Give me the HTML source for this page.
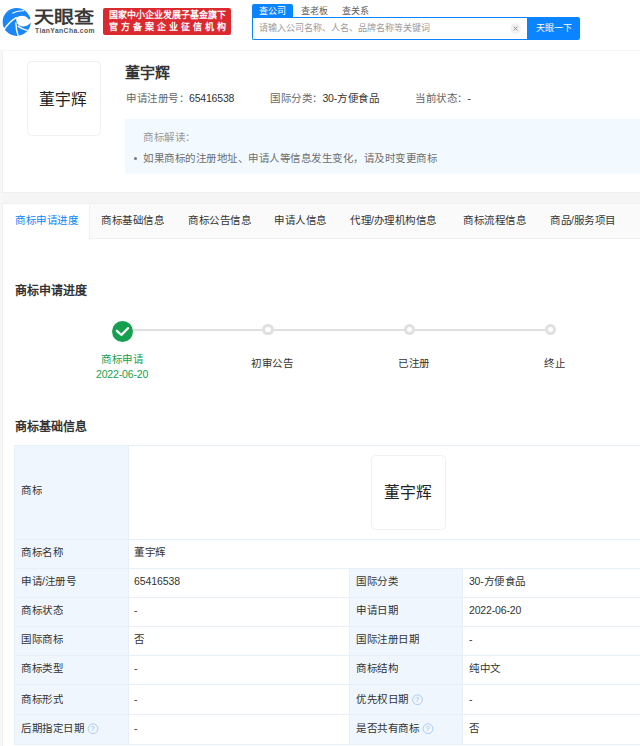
<!DOCTYPE html>
<html lang="zh-CN"><head><meta charset="utf-8">
<style>
*{margin:0;padding:0;box-sizing:border-box}
html,body{width:640px;height:746px;overflow:hidden;background:#f5f5f5;font-family:"Liberation Sans",sans-serif;color:#333}
.a{position:absolute;white-space:nowrap}
.s{position:absolute;white-space:nowrap;transform:scale(.75);transform-origin:0 0;font-size:14px;line-height:16px}
.box{position:absolute}
.logo-box{position:absolute;width:74.5px;height:74.5px;border:1px solid #f0f0f0;border-radius:4.5px;background:#fff}
.serif{font-family:"Liberation Serif",serif;font-size:21px;color:#222;letter-spacing:0.4px;line-height:22px}
.g{color:#666}
.bl{background:#eff6fd}
.q{display:inline-block;width:14px;height:14px;border:1.2px solid #98bfe7;border-radius:50%;color:#98bfe7;font-size:10px;line-height:12px;text-align:center;vertical-align:1.3px;margin-left:4.5px}
</style></head><body>
<!-- header -->
<div class="box" style="left:0;top:0;width:640px;height:50px;background:#fff"></div>
<svg class="a" style="left:0;top:0" width="40" height="40" viewBox="0 0 40 40">
<circle cx="16.65" cy="21.95" r="14" fill="#1a86f8"/>
<path d="M16.2 17.6 Q21 14.6 25.6 16.5 Q27.7 17.5 28.4 19.2 L31.5 19.2 L31.5 21 Q29.5 25.6 24.6 26.3 Q21 26.7 19 25.2 Q16.3 23.5 16.2 20 Z" fill="#fff"/>
<path d="M4 29.9 Q9 21.6 16.6 17.3" stroke="#fff" stroke-width="1.5" fill="none"/>
<path d="M15.8 22.6 Q16 30 18.4 36.5" stroke="#fff" stroke-width="1.4" fill="none"/>
<path d="M17.8 25.8 Q21.5 29.4 27.8 30.4" stroke="#fff" stroke-width="1.3" fill="none"/>
<path d="M12.3 13.2 Q18 10.6 24.3 10.8" stroke="#fff" stroke-width="1.1" fill="none"/>
</svg>
<div class="s" style="left:34px;top:8px;font-size:26px;line-height:28px;color:#383838;font-weight:bold;transform:scale(.771,.667)">天眼查</div>
<div class="s" style="left:35px;top:27px;font-size:9px;line-height:10px;color:#555;letter-spacing:0.54px;font-weight:bold">TianYanCha.com</div>
<div class="box" style="left:103px;top:7.5px;width:128px;height:27.75px;background:#da2a30;border-radius:2px"></div>
<div class="s" style="left:109px;top:10px;font-size:12px;line-height:14px;color:#fff;font-weight:bold">国家中小企业发展子基金旗下</div>
<div class="s" style="left:109px;top:22px;font-size:12px;line-height:14px;color:#fff;letter-spacing:3.94px;font-weight:bold">官方备案企业征信机构</div>
<!-- search -->
<div class="box" style="left:252px;top:3.9px;width:41.2px;height:13.8px;background:#0a84ff;border-radius:2px 2px 0 0"></div>
<div class="s" style="left:259px;top:6px;font-size:12px;line-height:14px;color:#fff">查公司</div>
<div class="s" style="left:300.5px;top:6px;font-size:12px;line-height:14px;color:#606060">查老板</div>
<div class="s" style="left:341.5px;top:6px;font-size:12px;line-height:14px;color:#606060">查关系</div>
<div class="box" style="left:252px;top:17.2px;width:276px;height:22.4px;border:1.5px solid #0a84ff;border-right:none;border-radius:0 0 0 2px;background:#fff"></div>
<div class="s" style="left:259.4px;top:23px;font-size:12px;line-height:14px;color:#9a9a9a">请输入公司名称、人名、品牌名称等关键词</div>
<svg class="a" style="left:509px;top:22px" width="13" height="13" viewBox="0 0 13 13"><circle cx="6.6" cy="6.5" r="5.3" fill="#f1f1f1"/><path d="M4.7 4.6L8.5 8.4M8.5 4.6L4.7 8.4" stroke="#8a8a8a" stroke-width="0.9"/></svg>

<div class="box" style="left:527.3px;top:17px;width:52.7px;height:22.6px;background:#0a84ff;border-radius:0 2px 2px 0"></div>
<div class="s" style="left:536px;top:22.5px;font-size:12px;line-height:14px;color:#fff">天眼一下</div>

<!-- card 1 -->
<div class="box" style="left:0;top:50px;width:2px;height:700px;background:#f7f7f7"></div>
<div class="box" style="left:2px;top:50px;width:640px;height:142.5px;background:#fff;border:1px solid #efefef;border-top-color:#f5f5f5"></div>
<div class="logo-box" style="left:26.5px;top:61.2px"></div>
<div class="s serif" style="left:38.5px;top:90.5px">董宇辉</div>
<div class="s" style="left:125px;top:63.5px;font-size:20px;line-height:22px;font-weight:bold;color:#333">董宇辉</div>
<div class="s g" style="left:125.5px;top:91.5px">申请注册号：<span style="color:#333;letter-spacing:-0.25px">65416538</span></div>
<div class="s g" style="left:269.5px;top:91.5px">国际分类：<span style="color:#333"><span style="letter-spacing:-0.3px">30-</span>方便食品</span></div>
<div class="s g" style="left:414.5px;top:91.5px">当前状态：<span style="color:#333">-</span></div>
<div class="box" style="left:125px;top:119.2px;width:520px;height:54.8px;background:#f3faff"></div>
<div class="s" style="left:142.8px;top:131px;color:#999">商标解读：</div>
<div class="box" style="left:134.2px;top:156.5px;width:3px;height:3px;border-radius:50%;background:#777"></div>
<div class="s" style="left:142.8px;top:152px;color:#6e6e6e">如果商标的注册地址、申请人等信息发生变化，请及时变更商标</div>

<!-- card 2 -->
<div class="box" style="left:2px;top:203px;width:640px;height:560px;background:#fff;border:1px solid #efefef"></div>
<div class="box" style="left:2.5px;top:203.5px;width:640px;height:35.5px;background:#fafafa;border-bottom:1px solid #f0f0f0"></div>
<div class="box" style="left:2.5px;top:203.5px;width:87px;height:36px;background:#fff;border-right:1px solid #f0f0f0"></div>
<div class="s" style="left:15px;top:213.5px;color:#0a84ff">商标申请进度</div>
<div class="s" style="left:101px;top:213.5px">商标基础信息</div>
<div class="s" style="left:187.5px;top:213.5px">商标公告信息</div>
<div class="s" style="left:274px;top:213.5px">申请人信息</div>
<div class="s" style="left:350.3px;top:213.5px">代理/办理机构信息</div>
<div class="s" style="left:462.8px;top:213.5px">商标流程信息</div>
<div class="s" style="left:549.6px;top:213.5px">商品/服务项目</div>

<div class="s" style="left:15px;top:284.5px;font-size:16px;line-height:16px;font-weight:bold">商标申请进度</div>
<!-- progress -->
<div class="box" style="left:132px;top:329px;width:418px;height:2.2px;background:#e0e0e0"></div>
<svg class="a" style="left:111.7px;top:320.9px" width="21" height="21" viewBox="0 0 21 21">
<circle cx="10.5" cy="10.5" r="10.5" fill="#14a04f"/>
<path d="M4.9 9.8 L9.4 14 L16 7.2" stroke="#fff" stroke-width="2.3" fill="none" stroke-linecap="round" stroke-linejoin="round"/>
</svg>
<div class="box" style="left:262.3px;top:323.8px;width:11.6px;height:11.6px;border-radius:50%;border:3px solid #e0e0e0;background:#fff"></div>
<div class="box" style="left:403.6px;top:323.8px;width:11.6px;height:11.6px;border-radius:50%;border:3px solid #e0e0e0;background:#fff"></div>
<div class="box" style="left:544.5px;top:323.8px;width:11.6px;height:11.6px;border-radius:50%;border:3px solid #e0e0e0;background:#fff"></div>
<div class="s" style="left:101px;top:352.7px;color:#14a04f">商标申请</div>
<div class="s" style="left:95.7px;top:368px;color:#14a04f"><span style="letter-spacing:-0.22px">2022-06-20</span></div>
<div class="s" style="left:251px;top:356.5px">初审公告</div>
<div class="s" style="left:398px;top:356.5px">已注册</div>
<div class="s" style="left:543.7px;top:356.5px">终止</div>

<div class="s" style="left:15px;top:421px;font-size:16px;line-height:16px;font-weight:bold">商标基础信息</div>

<!-- table -->
<div class="box bl" style="left:14px;top:444.7px;width:114px;height:300.2px"></div>
<div class="box bl" style="left:349px;top:568px;width:113px;height:177px"></div>
<div class="box" style="left:14px;top:444.7px;width:640px;height:1px;background:#e7f0f9"></div>
<div class="box" style="left:14px;top:539px;width:640px;height:1px;background:#e7f0f9"></div>
<div class="box" style="left:14px;top:568px;width:640px;height:1px;background:#e7f0f9"></div>
<div class="box" style="left:14px;top:597px;width:640px;height:1px;background:#e7f0f9"></div>
<div class="box" style="left:14px;top:626.2px;width:640px;height:1px;background:#e7f0f9"></div>
<div class="box" style="left:14px;top:655.3px;width:640px;height:1px;background:#e7f0f9"></div>
<div class="box" style="left:14px;top:684.3px;width:640px;height:1px;background:#e7f0f9"></div>
<div class="box" style="left:14px;top:714.4px;width:640px;height:1px;background:#e7f0f9"></div>
<div class="box" style="left:14px;top:744.4px;width:640px;height:1px;background:#e7f0f9"></div>
<div class="box" style="left:14px;top:444.7px;width:1px;height:300.2px;background:#e7f0f9"></div>
<div class="box" style="left:128px;top:444.7px;width:1px;height:300.2px;background:#e7f0f9"></div>
<div class="box" style="left:349px;top:568px;width:1px;height:177px;background:#e7f0f9"></div>
<div class="box" style="left:462px;top:568px;width:1px;height:177px;background:#e7f0f9"></div>

<div class="s" style="left:20.8px;top:484.4px">商标</div>
<div class="logo-box" style="left:371.2px;top:455.2px"></div>
<div class="s serif" style="left:383.5px;top:484.2px">董宇辉</div>

<div class="s" style="left:20.9px;top:545.6px">商标名称</div>
<div class="s" style="left:134.1px;top:545.6px">董宇辉</div>

<div class="s" style="left:20.9px;top:574.6px">申请/注册号</div>
<div class="s" style="left:134.1px;top:574.6px"><span style="letter-spacing:-0.1px">65416538</span></div>
<div class="s" style="left:355.6px;top:574.6px">国际分类</div>
<div class="s" style="left:468.9px;top:574.6px"><span style="letter-spacing:-0.3px">30-</span>方便食品</div>

<div class="s" style="left:20.9px;top:603.6px">商标状态</div>
<div class="s" style="left:134.1px;top:603.6px">-</div>
<div class="s" style="left:355.6px;top:603.6px">申请日期</div>
<div class="s" style="left:468.9px;top:603.6px"><span style="letter-spacing:-0.22px">2022-06-20</span></div>

<div class="s" style="left:20.9px;top:632.8px">国际商标</div>
<div class="s" style="left:134.1px;top:632.8px">否</div>
<div class="s" style="left:355.6px;top:632.8px">国际注册日期</div>
<div class="s" style="left:468.9px;top:632.8px">-</div>

<div class="s" style="left:20.9px;top:661.9px">商标类型</div>
<div class="s" style="left:134.1px;top:661.9px">-</div>
<div class="s" style="left:355.6px;top:661.9px">商标结构</div>
<div class="s" style="left:468.9px;top:661.9px">纯中文</div>

<div class="s" style="left:20.9px;top:692.8px">商标形式</div>
<div class="s" style="left:134.1px;top:692.8px">-</div>
<div class="s" style="left:355.6px;top:692.8px">优先权日期<span class="q">?</span></div>
<div class="s" style="left:468.9px;top:692.8px">-</div>

<div class="s" style="left:20.9px;top:722px">后期指定日期<span class="q">?</span></div>
<div class="s" style="left:134.1px;top:722px">-</div>
<div class="s" style="left:355.6px;top:722px">是否共有商标<span class="q">?</span></div>
<div class="s" style="left:468.9px;top:722px">否</div>
</body></html>
